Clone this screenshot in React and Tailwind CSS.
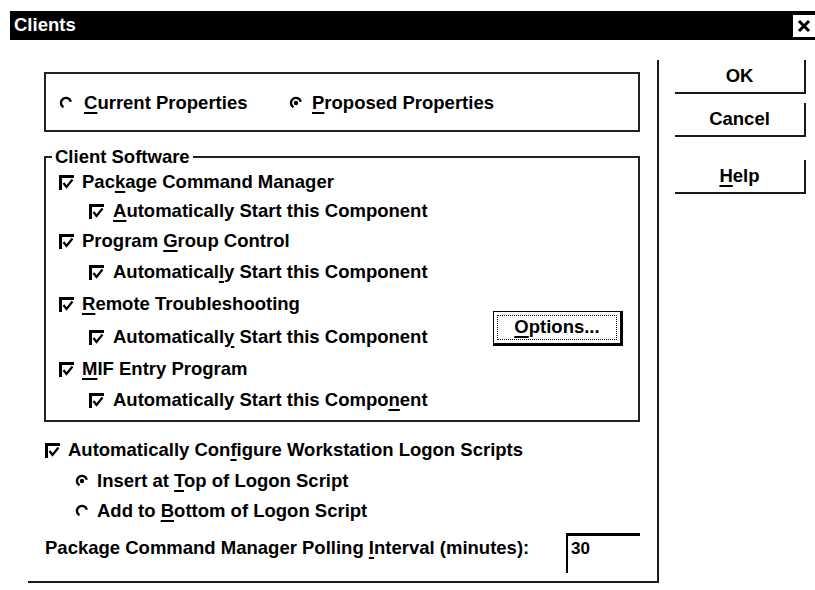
import React from 'react';

function Check({ className = '' }) {
  return (
    <span className={`inline-flex w-[15px] h-[15px] shrink-0 border-t-[3px] border-l-[3px] border-black ${className}`}>
      <svg width="12" height="12" viewBox="0 0 12 12">
        <polyline points="1.5,5 4.5,9 10.5,1.5" fill="none" stroke="black" strokeWidth="2.2" />
      </svg>
    </span>
  );
}

function Radio({ on = false }) {
  return (
    <svg width="14" height="14" viewBox="0 0 14 14" className="shrink-0">
      <path d="M4.5 11.3 A5 5 0 1 1 11.8 5.7" fill="none" stroke="black" strokeWidth="2.4" />
      {on && <circle cx="7" cy="7" r="2.2" fill="black" />}
    </svg>
  );
}

const U = ({ children }) => (
  <span className="underline underline-offset-[3px] decoration-[1.5px]">{children}</span>
);

const software = [
  { main: <>Pac<U>k</U>age Command Manager</>, sub: <><U>A</U>utomatically Start this Component</>, h: [29, 29] },
  { main: <>Program <U>G</U>roup Control</>, sub: <>Automatical<U>l</U>y Start this Component</>, h: [31, 31] },
  { main: <><U>R</U>emote Troubleshooting</>, sub: <>Automaticall<U>y</U> Start this Component</>, h: [33, 32] },
  { main: <><U>M</U>IF Entry Program</>, sub: <>Automatically Start this Compo<U>n</U>ent</>, h: [32, 31] },
];

function DialogButton({ children }) {
  return (
    <div className="h-[34px] border-r-2 border-b-2 border-[#1a1a1a] flex items-center justify-center">
      {children}
    </div>
  );
}

export default function App() {
  return (
    <div className="w-[815px] h-[590px] overflow-hidden bg-white pt-[11px] pl-[10px] text-black font-bold text-[18.5px] leading-none font-['Liberation_Sans',Arial,sans-serif]">
      {/* Title bar */}
      <div className="h-[29px] bg-black flex items-center justify-between">
        <span className="text-white pl-[4px]">Clients</span>
        <div className="w-[22px] h-[22px] bg-white flex items-center justify-center">
          <svg width="14" height="14" viewBox="0 0 14 14">
            <path d="M2 2 L12 12 M12 2 L2 12" stroke="black" strokeWidth="3" />
          </svg>
        </div>
      </div>

      <div className="flex">
        {/* Main panel */}
        <div className="ml-[18px] mt-[20px] w-[631px] h-[523px] border-r-2 border-b-2 border-[#1a1a1a] pl-[16px] pt-[12px]">
          <div className="w-[596px]">
            <div className="h-[60px] border-2 border-[#222] flex items-center pl-[13px] pt-[2px]">
              <div className="w-[230px] flex items-center gap-[11px]">
                <Radio />
                <span><U>C</U>urrent Properties</span>
              </div>
              <div className="flex items-center gap-[9px]">
                <Radio on />
                <span><U>P</U>roposed Properties</span>
              </div>
            </div>

            {/* Client Software group */}
            <div className="relative mt-[24px] h-[266px] border-2 border-[#222] flex">
              <span className="absolute -top-[10px] left-[6px] bg-white px-[3px]">Client Software</span>
              <div className="pl-[13px] pt-[10px] flex flex-col">
                {software.map((s, i) => (
                  <React.Fragment key={i}>
                    <div className="flex items-center gap-[8px]" style={{ height: s.h[0] }}>
                      <Check />
                      <span>{s.main}</span>
                    </div>
                    <div className="flex items-center gap-[9px] pl-[30px]" style={{ height: s.h[1] }}>
                      <Check />
                      <span>{s.sub}</span>
                    </div>
                  </React.Fragment>
                ))}
              </div>
              <div className="ml-auto mr-[15px] pt-[153px]">
                <div className="w-[130px] h-[35px] border border-black border-r-[3px] border-b-[3px] p-[3px]">
                  <div className="h-full border border-dotted border-black flex items-center justify-center">
                    <span><U>O</U>ptions...</span>
                  </div>
                </div>
              </div>
            </div>

            {/* Logon scripts */}
            <div className="mt-[12px] h-[32px] flex items-center gap-[8px] pl-[1px]">
              <Check />
              <span>Automatically Con<U>f</U>igure Workstation Logon Scripts</span>
            </div>
            <div className="h-[30px] flex items-center gap-[8px] pl-[31px]">
              <Radio on />
              <span>Insert at <U>T</U>op of Logon Script</span>
            </div>
            <div className="h-[30px] flex items-center gap-[8px] pl-[31px]">
              <Radio />
              <span>Add to <U>B</U>ottom of Logon Script</span>
            </div>

            <div className="mt-[7px] flex items-start justify-between pl-[1px]">
              <span className="mt-[6px]">Package Command Manager Polling <U>I</U>nterval (minutes):</span>
              <div className="w-[74px] h-[40px] border-l-2 border-t-[3px] border-black pl-[3px] pt-[4px] text-[17px]">30</div>
            </div>
          </div>
        </div>

        {/* Buttons */}
        <div className="ml-[16px] mt-[20px] w-[131px] flex flex-col">
          <DialogButton>OK</DialogButton>
          <div className="mt-[9px]">
            <DialogButton>Cancel</DialogButton>
          </div>
          <div className="mt-[23px]">
            <DialogButton><span><U>H</U>elp</span></DialogButton>
          </div>
        </div>
      </div>
    </div>
  );
}
